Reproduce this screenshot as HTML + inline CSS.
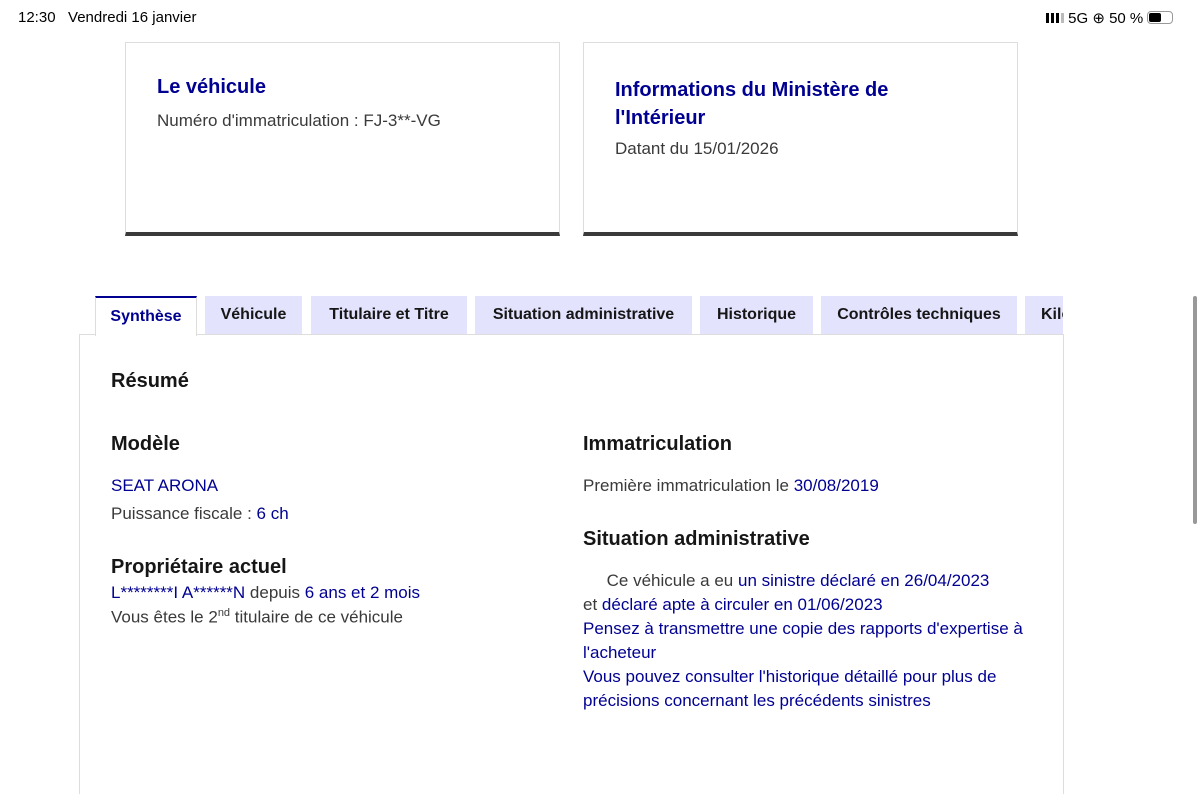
<!DOCTYPE html>
<html><head><meta charset="utf-8"><style>
*{margin:0;padding:0;box-sizing:border-box}
body{width:1200px;height:788px;overflow:hidden;background:#fff;font-family:"Liberation Sans",sans-serif;color:#3a3a3a;position:relative}
.a{position:absolute;white-space:nowrap}
.b{color:#000091}
.card{position:absolute;top:42px;width:435px;height:194px;border:1px solid #ddd;border-bottom:4px solid #3a3a3a;background:#fff}
.tab{position:absolute;top:296px;height:38px;background:#e3e3fd;color:#161616;font-weight:bold;font-size:16px;line-height:38px;text-align:center}
h3{font-size:20px;color:#161616;font-weight:bold}
.t{font-size:17px}
</style></head><body>
<div class="a" style="left:18px;top:9px;font-size:15px;color:#000">12:30&nbsp;&nbsp; Vendredi 16 janvier</div>
<div class="a" style="left:1046px;top:9px;font-size:15px;color:#000"><span style="display:inline-block;width:18px;height:10px;background:linear-gradient(90deg,#000 0 3px,transparent 3px 5px,#000 5px 8px,transparent 8px 10px,#000 10px 13px,transparent 13px 15px,#bbb 15px 18px)"></span> 5G ⊕ 50 % <span style="display:inline-block;width:26px;height:13px;border:1px solid #999;border-radius:4px;vertical-align:-1px;padding:1px"><span style="display:block;width:12px;height:9px;background:#000;border-radius:2px"></span></span></div>
<div class="card" style="left:125px"><div class="a b" style="left:31px;top:33px;font-size:20px;font-weight:bold">Le véhicule</div><div class="a t" style="left:31px;top:68px">Numéro d'immatriculation : FJ-3**-VG</div></div>
<div class="card" style="left:583px"><div class="a b" style="left:31px;top:33px;font-size:20px;font-weight:bold;line-height:28px;white-space:normal;width:320px">Informations du Ministère de l'Intérieur</div><div class="a t" style="left:31px;top:96px">Datant du 15/01/2026</div></div>
<div style="position:absolute;left:79px;top:334px;width:985px;height:460px;border:1px solid #ddd;border-bottom:none"></div>
<div class="tab" style="left:95px;width:102px;background:#fff;color:#000091;border-top:2px solid #000091;border-left:1px solid #ddd;border-right:1px solid #ddd;height:40px">Synthèse</div>
<div class="tab" style="left:205px;width:97px">Véhicule</div>
<div class="tab" style="left:311px;width:156px">Titulaire et Titre</div>
<div class="tab" style="left:475px;width:217px">Situation administrative</div>
<div class="tab" style="left:700px;width:113px">Historique</div>
<div class="tab" style="left:821px;width:196px">Contrôles techniques</div>
<div class="tab" style="left:1025px;width:38px;overflow:hidden;text-align:left;padding-left:16px">Kilo</div>
<h3 class="a" style="left:111px;top:370px">Résumé</h3>
<h3 class="a" style="left:111px;top:433px">Modèle</h3>
<div class="a t b" style="left:111px;top:476px">SEAT ARONA</div>
<div class="a t" style="left:111px;top:504px">Puissance fiscale : <span class="b">6 ch</span></div>
<h3 class="a" style="left:111px;top:556px">Propriétaire actuel</h3>
<div class="a t" style="left:111px;top:583px"><span class="b">L********I A******N</span> depuis <span class="b">6 ans et 2 mois</span></div>
<div class="a t" style="left:111px;top:607px">Vous êtes le 2<sup style="font-size:11px">nd</sup> titulaire de ce véhicule</div>
<h3 class="a" style="left:583px;top:433px">Immatriculation</h3>
<div class="a t" style="left:583px;top:476px">Première immatriculation le <span class="b">30/08/2019</span></div>
<h3 class="a" style="left:583px;top:528px">Situation administrative</h3>
<div class="a t" style="left:583px;top:569px;line-height:24px;white-space:normal;width:460px">&nbsp;&nbsp;&nbsp;&nbsp; Ce véhicule a eu <span class="b">un sinistre déclaré en 26/04/2023</span><br>et <span class="b">déclaré apte à circuler en 01/06/2023</span><br><span class="b">Pensez à transmettre une copie des rapports d'expertise à l'acheteur<br>Vous pouvez consulter l'historique détaillé pour plus de précisions concernant les précédents sinistres</span></div>
<div style="position:absolute;left:1193px;top:296px;width:4px;height:228px;background:#999;border-radius:2px"></div>
</body></html>
